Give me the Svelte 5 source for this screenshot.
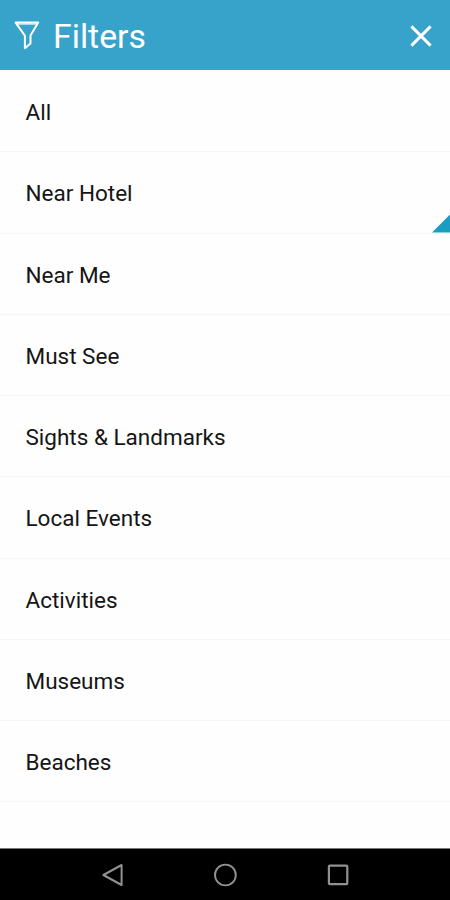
<script lang="ts">
	const filters = [
		{ label: 'All' },
		{ label: 'Near Hotel', marked: true },
		{ label: 'Near Me' },
		{ label: 'Must See' },
		{ label: 'Sights & Landmarks' },
		{ label: 'Local Events' },
		{ label: 'Activities' },
		{ label: 'Museums' },
		{ label: 'Beaches' }
	];

	let open = $state(true);
</script>

<div class="screen">
	<header class="header">
		<svg class="funnel" width="26" height="30" viewBox="0 0 26 30" fill="none">
			<path d="M1.6 1.6h22.6l-7.7 13v8l-5.6 4.6V14.6z" stroke="currentColor" stroke-width="2" stroke-linejoin="round" />
			<path d="M2.8 3h20" stroke="currentColor" stroke-width="1.2" />
		</svg>
		<h1>Filters</h1>
		<button type="button" class="close" aria-label="Close" onclick={() => (open = false)}>
			<svg width="24" height="24" viewBox="0 0 24 24" fill="none">
				<path d="M2.4 2.4l19.2 19.2M21.6 2.4L2.4 21.6" stroke="currentColor" stroke-width="2.9" />
			</svg>
		</button>
	</header>

	<ul class="list">
		{#if open}
			{#each filters as filter}
				<li>
					<span>{filter.label}</span>
					{#if filter.marked}
						<i class="corner"></i>
					{/if}
				</li>
			{/each}
		{/if}
	</ul>

	<nav class="navbar">
		<svg width="26" height="26" viewBox="0 0 26 26" fill="none">
			<path d="M4.4 13L22.6 3v20z" stroke="currentColor" stroke-width="2" stroke-linejoin="round" />
		</svg>
		<svg width="26" height="26" viewBox="0 0 26 26" fill="none">
			<circle cx="13.4" cy="13" r="10.4" stroke="currentColor" stroke-width="1.9" />
		</svg>
		<svg width="26" height="26" viewBox="0 0 26 26" fill="none">
			<rect x="3.9" y="3.6" width="18.4" height="18.6" rx="1" stroke="currentColor" stroke-width="2.2" />
		</svg>
	</nav>
</div>

<style>
	:global(body) {
		margin: 0;
	}

	.screen {
		height: 900px;
		display: flex;
		flex-direction: column;
		overflow: hidden;
		background: #fefefe;
		font-family: Roboto, sans-serif;
		color: #151515;
	}

	/* Header */
	.header {
		box-sizing: border-box;
		height: 70px;
		flex-shrink: 0;
		display: flex;
		align-items: center;
		padding: 0 17.5px 0 14px;
		background: #38a3ca;
		border-bottom: 1px solid #4c9fbd;
		color: #fff;
	}

	.funnel {
		margin-top: 3px;
	}

	h1 {
		margin: 5px 0 0 13px;
		font-size: 33.8px;
		font-weight: 400;
		line-height: 40px;
	}

	.close {
		display: flex;
		margin: 2px 0 0 auto;
		padding: 0;
		border: none;
		background: none;
		color: inherit;
	}

	/* Filter rows */
	.list {
		flex: 1;
		margin: 0;
		padding: 1px 0 0;
		list-style: none;
	}

	li {
		position: relative;
		box-sizing: border-box;
		height: 81.25px;
		display: flex;
		align-items: center;
		padding: 2px 26px 0 25.5px;
		border-bottom: 1px solid #f6f6f6;
		font-size: 22.5px;
		line-height: 28px;
	}

	.corner {
		position: absolute;
		right: 0;
		bottom: 0;
		width: 18px;
		height: 18px;
		background: #1b9cc2;
		clip-path: polygon(100% 0, 100% 100%, 0 100%);
	}

	/* System navigation */
	.navbar {
		box-sizing: border-box;
		height: 52px;
		flex-shrink: 0;
		display: flex;
		align-items: center;
		justify-content: center;
		gap: 87px;
		border-top: 1px solid #777;
		background: #000;
		color: #929292;
	}
</style>
